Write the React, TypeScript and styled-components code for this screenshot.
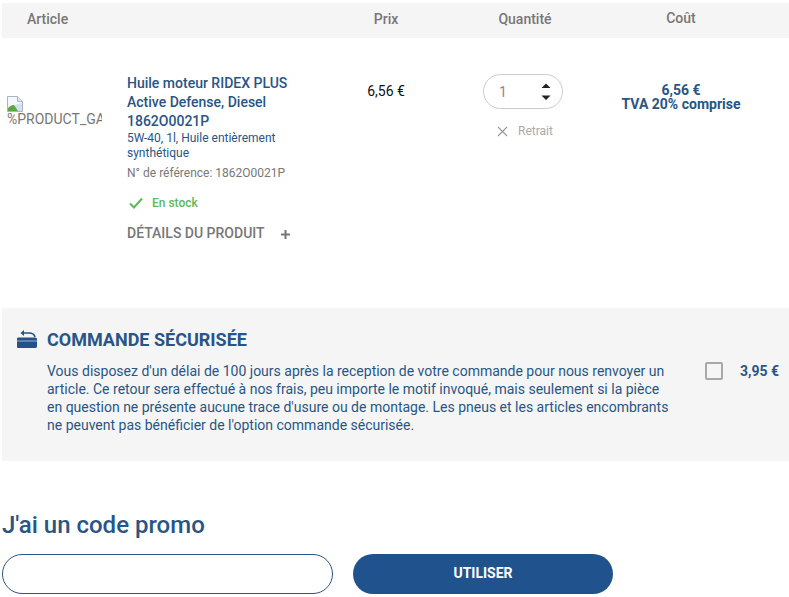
import React, { FC } from 'react';
import styled, { createGlobalStyle } from 'styled-components';

const GlobalStyle = createGlobalStyle`
  html, body {
    margin: 0;
    padding: 0;
    background: #fff;
    font-family: Roboto, "Liberation Sans", sans-serif;
  }
`;

const blue = '#285585';

const Page = styled.div`
  width: 789px;
  height: 597px;
  overflow: hidden;
  padding: 3px 0 0 2px;
  box-sizing: border-box;
`;

const columns = '125px 209px 100px 174px 142px';

const HeaderRow = styled.div`
  display: grid;
  grid-template-columns: ${columns};
  height: 35px;
  background: #f5f5f5;
  color: #777;
  font-size: 14px;
  font-weight: 500;
  line-height: 32px;
`;

const HeaderCell = styled.div<{ $lift?: boolean; $nudge?: boolean }>`
  text-align: center;
  margin-top: ${(p) => (p.$lift ? '-1px' : '0')};
  padding-left: ${(p) => (p.$nudge ? '4px' : '0')};
`;

const ArticleHead = styled.div`
  grid-column: 1 / 3;
  padding-left: 25px;
`;

const ItemRow = styled.div`
  display: grid;
  grid-template-columns: ${columns};
  height: 270px;
  padding-top: 36px;
  box-sizing: border-box;
`;

const ImageCell = styled.div`
  padding: 22px 0 0 5px;
`;

const BrokenImage = styled.div`
  width: 95px;
  overflow: hidden;
  white-space: nowrap;
  font-family: Roboto, "Liberation Sans", sans-serif;
  font-size: 14px;
  line-height: 16px;
  color: #777;
`;

const BrokenIcon = styled.svg`
  display: block;
  width: 16px;
  height: 16px;
  margin-bottom: -1px;
`;

const Details = styled.div`
  min-width: 0;
`;

const ProductName = styled.div`
  color: ${blue};
  font-size: 14px;
  font-weight: 500;
  line-height: 19px;
  width: 190px;
`;

const ProductSpec = styled.div`
  color: ${blue};
  font-size: 12px;
  line-height: 15px;
  width: 170px;
`;

const Reference = styled.div`
  color: #777;
  font-size: 12px;
  line-height: 15px;
  margin-top: 5px;
`;

const Stock = styled.div`
  display: flex;
  align-items: center;
  gap: 9px;
  color: #5cb85c;
  font-size: 12px;
  font-weight: 500;
  line-height: 16px;
  margin: 14px 0 0 2px;
`;

const DetailsToggle = styled.div`
  display: flex;
  align-items: center;
  gap: 16px;
  color: #777;
  font-size: 14px;
  font-weight: 500;
  line-height: 18px;
  margin-top: 13px;
`;

const PlusSign = styled.svg`
  width: 9px;
  height: 9px;
  margin-top: 3px;
`;

const PriceCell = styled.div`
  text-align: center;
  font-size: 14px;
  line-height: 18px;
  color: #111;
  padding-top: 8px;
`;

const QuantityCell = styled.div`
  display: flex;
  flex-direction: column;
  align-items: center;
`;

const Stepper = styled.div`
  display: flex;
  align-items: center;
  justify-content: space-between;
  width: 80px;
  height: 35px;
  box-sizing: border-box;
  border: 1px solid #ccc;
  border-radius: 18px;
  padding: 0 11px 0 15px;
  color: #888;
  font-size: 14px;
`;

const Arrows = styled.svg`
  width: 10px;
  height: 20px;
`;

const RemoveLink = styled.div`
  display: flex;
  align-items: center;
  gap: 10px;
  margin: 14px 0 0 4px;
  color: #aaa;
  font-size: 12px;
  line-height: 16px;
`;

const CostCell = styled.div`
  text-align: center;
  color: ${blue};
  font-size: 14px;
  font-weight: 700;
  line-height: 14px;
  padding-top: 9px;
`;

const InsurancePanel = styled.section`
  display: flex;
  width: 787px;
  height: 153px;
  box-sizing: border-box;
  background: #f5f5f5;
  padding: 21px 0 0 15px;
`;

const InsuranceIcon = styled.svg`
  width: 20px;
  height: 18px;
  margin: 1px 10px 0 0;
  flex: none;
`;

const InsuranceBody = styled.div`
  width: 630px;
  flex: none;
`;

const InsuranceTitle = styled.h2`
  margin: 0 0 11px;
  color: ${blue};
  font-size: 18px;
  font-weight: 700;
  line-height: 22px;
`;

const InsuranceText = styled.p`
  margin: 0;
  color: ${blue};
  font-size: 14px;
  line-height: 18px;
`;

const InsuranceOption = styled.div`
  display: flex;
  align-items: center;
  gap: 17px;
  margin: 31px 0 0 28px;
  height: 22px;
`;

const CheckBox = styled.span`
  display: block;
  width: 18px;
  height: 18px;
  box-sizing: border-box;
  border: 2px solid #a8a8a8;
  border-radius: 2px;
`;

const InsurancePrice = styled.span`
  color: ${blue};
  font-size: 14px;
  font-weight: 700;
`;

const PromoTitle = styled.h2`
  margin: 47px 0 12px;
  color: ${blue};
  font-size: 24px;
  font-weight: 500;
  line-height: 34px;
`;

const PromoForm = styled.div`
  display: flex;
  gap: 20px;
`;

const PromoInput = styled.div`
  width: 331px;
  height: 40px;
  box-sizing: border-box;
  border: 1px solid ${blue};
  border-radius: 20px;
  background: #fff;
`;

const PromoButton = styled.div`
  width: 260px;
  height: 40px;
  border-radius: 20px;
  background: #20538d;
  color: #fff;
  font-size: 14px;
  font-weight: 700;
  line-height: 38px;
  text-align: center;
`;

const App: FC = () => (
  <Page>
    <GlobalStyle />
    <HeaderRow>
      <ArticleHead>Article</ArticleHead>
      <HeaderCell>Prix</HeaderCell>
      <HeaderCell $nudge>Quantité</HeaderCell>
      <HeaderCell $lift>Coût</HeaderCell>
    </HeaderRow>

    <ItemRow>
      <ImageCell>
        <BrokenImage>
          <BrokenIcon viewBox="0 0 16 16">
            <path d="M.5.5h10l5 5v10H.5z" fill="#f4f7fb" stroke="#a9b4bf" />
            <path d="M10.500.5v5h5" fill="#dfe6ee" stroke="#a9b4bf" />
            <path d="M1 15v-3c3-3 6-4 8-2l3 5z" fill="#58a83e" />
            <path d="M11 15 7 9l8-2v8z" fill="#cfe2f3" />
          </BrokenIcon>
          %PRODUCT_GALLERY%
        </BrokenImage>
      </ImageCell>
      <Details>
        <ProductName>
          Huile moteur RIDEX PLUS Active Defense, Diesel 1862O0021P
        </ProductName>
        <ProductSpec>5W-40, 1l, Huile entièrement synthétique</ProductSpec>
        <Reference>N° de référence: 1862O0021P</Reference>
        <Stock>
          <svg width="14" height="12" viewBox="0 0 14 12" fill="none">
            <path d="M1 6.500 5 10.500 13 1.500" stroke="#5cb85c" strokeWidth="2" />
          </svg>
          En stock
        </Stock>
        <DetailsToggle>
          DÉTAILS DU PRODUIT
          <PlusSign viewBox="0 0 9 9">
            <path d="M4.500 0v9M0 4.500h9" stroke="#777" strokeWidth="2" />
          </PlusSign>
        </DetailsToggle>
      </Details>
      <PriceCell>6,56 €</PriceCell>
      <QuantityCell>
        <Stepper>
          1
          <Arrows viewBox="0 0 10 20">
            <path d="M5 1.500 9.500 6H.5zM.5 13.500h9L5 18z" fill="#222" />
          </Arrows>
        </Stepper>
        <RemoveLink>
          <svg width="11" height="11" viewBox="0 0 11 11">
            <path d="M1 1l9 9M10 1l-9 9" stroke="#999" strokeWidth="1.100" />
          </svg>
          Retrait
        </RemoveLink>
      </QuantityCell>
      <CostCell>
        6,56 €
        <br />
        TVA 20% comprise
      </CostCell>
    </ItemRow>

    <InsurancePanel>
      <InsuranceIcon viewBox="0 0 20 18">
        <path d="M0 8.500Q0 7.500 1.500 7.500H18Q20 7.500 20 9V16.500Q20 18 18 18H1Q0 18 0 17z" fill="#23528a" />
        <path d="M3 0v6L-.5 3z" fill="#23528a" transform="translate(4 0)" />
        <path d="M6 3H12Q17 3 18 7" fill="none" stroke="#23528a" strokeWidth="1.600" />
        <path d="M0 11h20" stroke="#f5f5f5" strokeWidth=".6" />
      </InsuranceIcon>
      <InsuranceBody>
        <InsuranceTitle>COMMANDE SÉCURISÉE</InsuranceTitle>
        <InsuranceText>
          Vous disposez d'un délai de 100 jours après la reception de votre
          commande pour nous renvoyer un article. Ce retour sera effectué à nos
          frais, peu importe le motif invoqué, mais seulement si la pièce en
          question ne présente aucune trace d'usure ou de montage. Les pneus et
          les articles encombrants ne peuvent pas bénéficier de l'option
          commande sécurisée.
        </InsuranceText>
      </InsuranceBody>
      <InsuranceOption>
        <CheckBox />
        <InsurancePrice>3,95 €</InsurancePrice>
      </InsuranceOption>
    </InsurancePanel>

    <PromoTitle>J'ai un code promo</PromoTitle>
    <PromoForm>
      <PromoInput />
      <PromoButton>UTILISER</PromoButton>
    </PromoForm>
  </Page>
);

export default App;
